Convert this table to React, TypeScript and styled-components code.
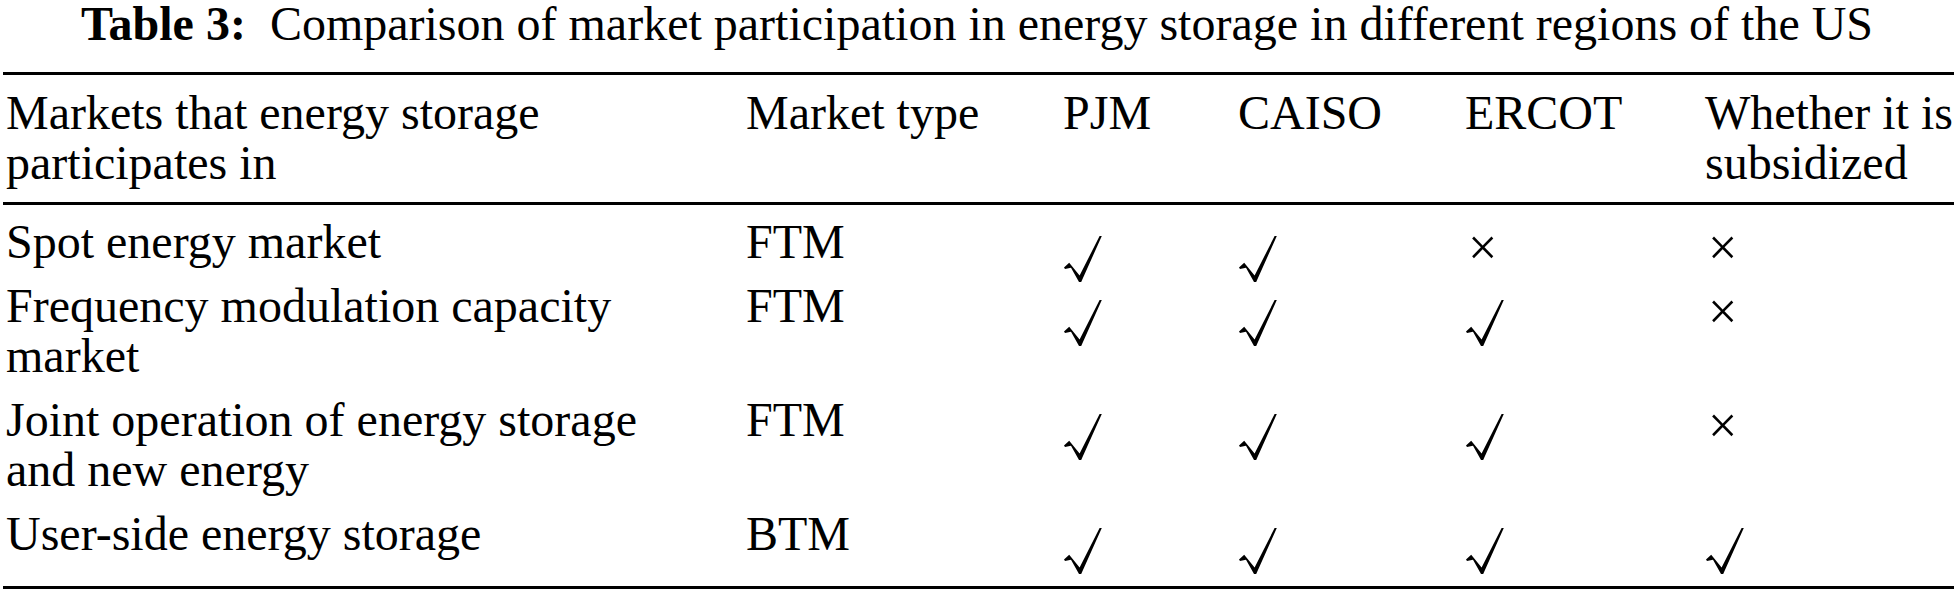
import React from 'react';
import styled, { createGlobalStyle } from 'styled-components';

const GlobalStyle = createGlobalStyle`
    html, body {
        margin: 0;
        padding: 0;
        background: #fff;
        overflow: hidden;
    }
    body {
        font-family: "Liberation Serif", "Times New Roman", serif;
        color: #000;
    }
`

const COLUMNS = '740px 317px 175px 227px 240px 1fr';

const Page = styled.div`
    width: 1954px;
    height: 596px;
`
const Caption = styled.div`
    font-size: 48px;
    line-height: 48px;
    height: 48px;
    text-align: center;
    white-space: nowrap;
`
const CaptionLabel = styled.span`
    font-weight: 700;
    margin-right: 24px;
`
const Table = styled.div`
    margin-top: 24px;
    margin-left: 3px;
    border-top: 3px solid #000;
    border-bottom: 3px solid #000;
    font-size: 48px;
    line-height: 50px;
`
const HeaderRow = styled.div`
    display: grid;
    grid-template-columns: ${COLUMNS};
    padding: 13px 0 14px;
    border-bottom: 3px solid #000;
`
const BodyRow = styled.div<{ $top: number; $bottom: number }>`
    display: grid;
    grid-template-columns: ${COLUMNS};
    align-items: start;
    padding-top: ${p => p.$top}px;
    padding-bottom: ${p => p.$bottom}px;
`
const Cell = styled.div`
    padding-left: 3px;
    white-space: nowrap;
`
const Cross = styled.div`
    padding: 6px 0 0 6px;
    font-size: 52px;
    height: 44px;
`
const CheckBox = styled.div`
    padding-left: 4px;
    height: 50px;
`
const CheckSvg = styled.svg`
    display: block;
    margin-top: 19px;
    width: 38px;
    height: 46px;
`

// radical-style tick, thick short stroke on the left, hairline up to the right
const Check = () => (
    <CheckBox>
        <CheckSvg viewBox="0 0 38 46">
            <path d="M0,31.6 L5.2,26.8 L15.6,39.6 L35.6,0 L37.8,0 L17.2,46 L15,46 L7,31.8 L1,33 Z" fill="#000" />
        </CheckSvg>
    </CheckBox>
)

type Mark = 'yes' | 'no';

const rows: { label: string[]; type: string; marks: Mark[] }[] = [
    { label: ['Spot energy market'], type: 'FTM', marks: ['yes', 'yes', 'no', 'no'] },
    { label: ['Frequency modulation capacity', 'market'], type: 'FTM', marks: ['yes', 'yes', 'yes', 'no'] },
    { label: ['Joint operation of energy storage', 'and new energy'], type: 'FTM', marks: ['yes', 'yes', 'yes', 'no'] },
    { label: ['User-side energy storage'], type: 'BTM', marks: ['yes', 'yes', 'yes', 'yes'] },
];

const Lines = ({ lines }: { lines: string[] }) => (
    <>
        {lines.map((l, i) => (
            <React.Fragment key={i}>
                {i > 0 && <br />}
                {l}
            </React.Fragment>
        ))}
    </>
)

export default function App() {
    return (
        <Page>
            <GlobalStyle />
            <Caption>
                <CaptionLabel>Table 3:</CaptionLabel>
                Comparison of market participation in energy storage in different regions of the US
            </Caption>
            <Table>
                <HeaderRow>
                    <Cell><Lines lines={['Markets that energy storage', 'participates in']} /></Cell>
                    <Cell>Market type</Cell>
                    <Cell>PJM</Cell>
                    <Cell>CAISO</Cell>
                    <Cell>ERCOT</Cell>
                    <Cell><Lines lines={['Whether it is', 'subsidized']} /></Cell>
                </HeaderRow>
                {rows.map((r, i) => (
                    <BodyRow key={i} $top={i === 0 ? 12 : 6} $bottom={i === rows.length - 1 ? 27 : 8}>
                        <Cell><Lines lines={r.label} /></Cell>
                        <Cell>{r.type}</Cell>
                        {r.marks.map((m, j) => m === 'yes' ? <Check key={j} /> : <Cross key={j}>×</Cross>)}
                    </BodyRow>
                ))}
            </Table>
        </Page>
    );
}
